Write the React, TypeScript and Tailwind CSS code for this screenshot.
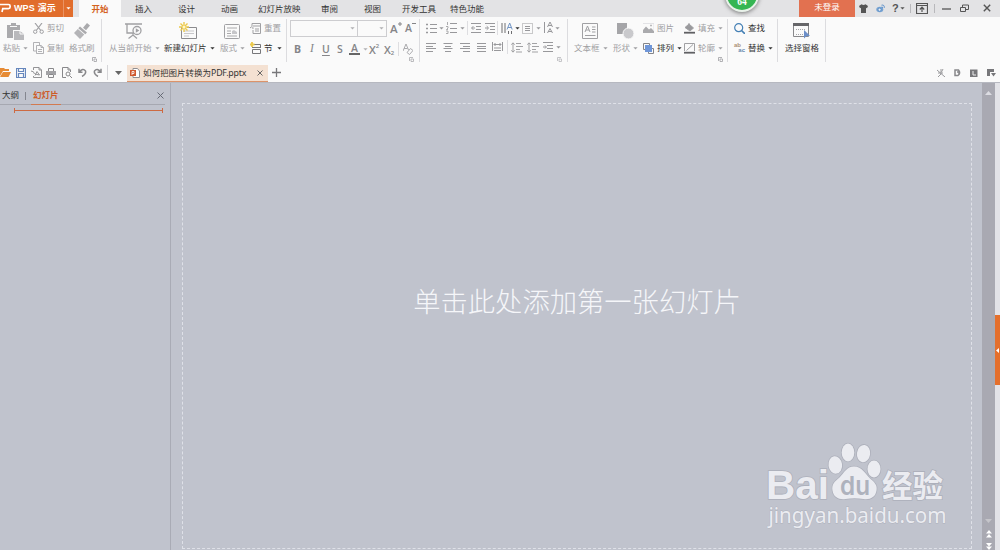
import React from 'react';

type Kids = { children?: React.ReactNode; className?: string };

const Icon = ({ w, h, children, className = '' }: Kids & { w: number; h: number }) => (
  <svg width={w} height={h} viewBox={`0 0 ${w} ${h}`} fill="none" stroke="currentColor" strokeWidth="1" className={`block shrink-0 ${className}`}>
    {children}
  </svg>
);

const Arrow = ({ className = '' }: { className?: string }) => (
  <Icon w={5} h={3} className={className}>
    <path d="M0.4 0.2h4.2L2.5 2.6z" fill="currentColor" stroke="none" />
  </Icon>
);

const Cell = ({ children, className = '' }: Kids) => (
  <div className={`flex h-full shrink-0 items-center whitespace-nowrap ${className}`}>{children}</div>
);

const Row = ({ children, className = '' }: Kids) => <div className={`flex h-5 items-center ${className}`}>{children}</div>;

const Group = ({ children, className = '' }: Kids) => (
  <div className={`flex h-[43px] shrink-0 border-r border-[#dcdcdf] ${className}`}>{children}</div>
);

const Big = ({ icon, label, arrow, className = '', pad = '' }: { icon: React.ReactNode; label: string; arrow?: boolean; className?: string; pad?: string }) => (
  <div className={`flex shrink-0 flex-col ${className}`}>
    <div className={`flex h-[22px] items-center ${pad}`}>{icon}</div>
    <div className="flex h-[13px] items-center whitespace-nowrap">
      {label}
      {arrow && <Arrow className="ml-[3px]" />}
    </div>
  </div>
);

const Launcher = () => (
  <Icon w={5} h={5}>
    <path d="M.5 4V.5H4M2 2h2.500v2.500H2z" strokeWidth=".8" />
  </Icon>
);

const Bar = () => <i className="h-[14px] w-px shrink-0 bg-[#dedee1]" />;

const Bullets = () => (
  <Icon w={11} h={11}>
    <path d="M0 1.500h2M0 5.500h2M0 9.500h2" strokeWidth="1.6" />
    <path d="M4 1.500h7M4 5.500h7M4 9.500h7" />
  </Icon>
);
const Numbers = () => (
  <Icon w={11} h={12}>
    <path d="M1.500 0v3M0 4.500h2v1.500L.5 7.500H2M0 9h2v2.500H0" strokeWidth=".8" />
    <path d="M4 1.500h7M4 6.500h7M4 10.500h7" />
  </Icon>
);
const Indent = ({ flip = false }: { flip?: boolean }) => (
  <Icon w={10} h={11}>
    <path d="M0 .5h10M5 3.500h5M5 6.500h5M0 9.500h10" />
    <path d={flip ? 'M0 5h3M1.700 3.200L3.600 5 1.700 6.800' : 'M4 5H1M2.300 3.200L.5 5l1.800 1.800'} />
  </Icon>
);
const Align = ({ d }: { d: string }) => (
  <Icon w={10} h={9}>
    <path d={d} />
  </Icon>
);
const Spacing = () => (
  <Icon w={12} h={11}>
    <path d="M2 1v9M.3 2.700L2 .8l1.700 1.900M.3 8.300L2 10.200l1.700-1.900M5 1.500h5M5 4.500h7M5 7.500h4M5 10h6" strokeWidth=".9" />
  </Icon>
);

const TitleBar = () => (
  <header className="relative flex h-[17px] bg-[#e3e3e5] text-[#333]">
    <div className="flex w-[73px] shrink-0 items-center bg-[#e16d2c] pb-px text-white">
      <Icon w={11} h={10}>
        <path d="M0 1.500h8.500q1.600 0 1.600 1.500v1q0 1.600-1.600 1.600H2.800L2 9" strokeWidth="1.7" />
      </Icon>
      <span className="ml-[3px] w-[49px] whitespace-nowrap text-[9px] font-bold leading-none">
        <span className="tracking-[0.1px]">WPS</span>
        <span className="ml-[3px]">演示</span>
      </span>
      <i className="h-[17px] w-px bg-[#ea9363]" />
      <Arrow className="ml-[2px]" />
    </div>
    <div className="ml-[6px] flex w-[42px] shrink-0 items-center justify-center bg-[#fafafa] pt-[2px] font-bold text-[#d4621f]">开始</div>
    <nav className="flex items-center pt-[2px]">
      <span className="ml-[14px] w-[43px]">插入</span>
      <span className="w-[43px]">设计</span>
      <span className="w-[37px]">动画</span>
      <span className="w-[63px]">幻灯片放映</span>
      <span className="w-[43px]">审阅</span>
      <span className="w-[38px]">视图</span>
      <span className="w-[48px]">开发工具</span>
      <span className="w-[45px]">特色功能</span>
    </nav>
    <div className="absolute -top-[23px] left-[725px] flex h-[35px] w-[34px] items-end justify-center rounded-full border-2 border-[#e9f2ea] bg-[#35b653] pb-[4px] font-['Liberation_Serif'] text-[9.500px] font-bold leading-[8px] text-white shadow-[0_1px_4px_#777]">
      64
    </div>
    <div className="ml-auto flex w-[56px] shrink-0 items-center justify-center bg-[#e27150] pb-[2px] text-white">未登录</div>
    <div className="flex w-[145px] shrink-0 items-center pb-px text-[#555]">
      <Icon w={9} h={9} className="ml-[4px]">
        <path d="M2.500.3L0 2l1 2.300 1-.5V9h5V3.800l1 .5L9 2 6.500.3Q4.500 1.800 2.500.3z" fill="currentColor" stroke="none" />
      </Icon>
      <Icon w={9} h={9} className="ml-[8px] text-[#5b8fc9]">
        <ellipse cx="3.800" cy="5.500" rx="3.500" ry="2.800" fill="#79a4d2" stroke="none" />
        <circle cx="3.600" cy="5.700" r="1.600" fill="#e8edf3" />
        <path d="M5.500 1.200q3-.8 2.800 2.600M5.500 3q1.300-.2 1.200 1" />
      </Icon>
      <span className="ml-[7px] w-[7px] font-['Liberation_Sans'] text-[11px] font-bold leading-none">?</span>
      <Arrow className="ml-px" />
      <i className="ml-[5px] h-[9px] w-px bg-[#b8b8bb]" />
      <Icon w={12} h={11} className="ml-[5px]">
        <path d="M.5.500h11v10H.500zM.5 2.500h11M6 9V4.500M3.800 6.500L6 4.200l2.200 2.300" strokeWidth="1.2" />
      </Icon>
      <i className="ml-[6px] h-[9px] w-px bg-[#b8b8bb]" />
      <Icon w={9} h={8} className="ml-[7px]"><path d="M0 5h9" strokeWidth="1.300" /></Icon>
      <Icon w={9} h={8} className="ml-[9px]"><path d="M.5 3.500h5v4h-5zM2.500 3V1h6v4.500H6" /></Icon>
      <Icon w={8} h={8} className="ml-[14px]"><path d="M.8.800l6.400 6.400M7.200.800L.8 7.200" strokeWidth="1.400" /></Icon>
    </div>
  </header>
);

const Ribbon = () => (
  <div className="flex h-[46px] pt-[2px] text-[#a0a0a3]">
    <Group className="w-[102px] pt-px">
      <Big
        className="w-[33px] pl-[3px]"
        pad="pl-[4px]"
        label="粘贴"
        arrow
        icon={
          <Icon w={17} h={17}>
            <path d="M0 2h4V0h5v2h4v5H6v8H0z" fill="#aaaaad" stroke="none" />
            <path d="M3 3.500h7" stroke="#fafafa" />
            <path d="M7 8h6l4 3v6H7z" fill="#b9b9bc" stroke="none" />
            <path d="M13 8v3h4" stroke="#fafafa" />
          </Icon>
        }
      />
      <div className="w-[36px]">
        <Row className="-mt-[2px]">
          <Icon w={11} h={11}>
            <path d="M2 0l5.800 7.500M9 0L3.300 7.500" strokeWidth="1.200" />
            <circle cx="2.200" cy="8.700" r="1.700" /><circle cx="8.700" cy="8.700" r="1.700" />
          </Icon>
          <span className="ml-[3px]">剪切</span>
        </Row>
        <Row>
          <Icon w={11} h={12}>
            <path d="M3 9H.500V.500h6V3M3.500 3.500H8l2.500 2v6h-7zM8 3.500v2h2.500M5 7.500h4M5 9.500h4" strokeWidth=".8" />
          </Icon>
          <span className="ml-[3px]">复制</span>
        </Row>
      </div>
      <div className="w-[32px]">
        <Big
          pad="pl-[5px]"
          label="格式刷"
          icon={
            <Icon w={16} h={16}>
              <path d="M13 0l3 2.500-4 4.800L9 4.700zM6 3.500l7 6-1.700 1.700-7-6z" fill="#aaaaad" stroke="none" />
              <path d="M3.800 6l6.500 5.500L6 16 0 10z" fill="#b4b4b7" stroke="none" />
            </Icon>
          }
        />
        <div className="flex h-[8px] items-center pl-[23px]"><Launcher /></div>
      </div>
    </Group>

    <Group className="w-[185px] pt-px">
      <Big
        className="w-[62px] pl-[7px]"
        pad="pl-[16px]"
        label="从当前开始"
        arrow
        icon={
          <Icon w={17} h={16}>
            <path d="M0 1h17M2 1.500v8.500h7M8 10v3M3.500 15.500L8 12l4 3.500" strokeWidth="1.300" />
            <circle cx="12" cy="7.500" r="4" fill="#fafafa" strokeWidth="1.300" />
            <path d="M10.800 5.300v4.400l3.600-2.200z" fill="currentColor" stroke="none" />
          </Icon>
        }
      />
      <Big
        className="w-[56px] text-[#333]"
        pad="pl-[15px]"
        label="新建幻灯片"
        arrow
        icon={
          <Icon w={18} h={18}>
            <path d="M2.500 5v11.500h15V5.500H8" stroke="#8b8b8e" />
            <path d="M5 9h10M5 11.500h10M5 14h5" stroke="#c7c7ca" />
            <path d="M5 0v10M0 5h10M1.500 1.500l7 7M8.500 1.500l-7 7" stroke="#ecc94b" strokeWidth="1.400" />
            <circle cx="5" cy="5" r="1.500" fill="#fff7c9" stroke="none" />
          </Icon>
        }
      />
      <Big
        className="w-[30px]"
        pad="pl-[4px]"
        label="版式"
        arrow
        icon={
          <Icon w={16} h={15}>
            <rect x=".5" y=".5" width="15" height="14" rx="1" />
            <path d="M3 4h10M3 7h4M3 9.500h4M3 12h10" strokeWidth=".9" />
            <path d="M8 10V7l2-1 3 2v2z" fill="#c6c6c9" stroke="none" />
          </Icon>
        }
      />
      <div>
        <Row className="-mt-[2px]">
          <Icon w={11} h={11}>
            <path d="M2 3V.500h8.500v10H3V7M3 3h7M5 6h4M5 8h4M0 5q3-3 3 1" />
          </Icon>
          <span className="ml-[3px]">重置</span>
        </Row>
        <Row>
          <Icon w={11} h={12}>
            <path d="M2 5.500h9M4 2.500h6.500v3M2.500 7.500h8v4h-8z" stroke="#77777a" />
            <path d="M2 0v5M0 2.500h4.500" stroke="#ecc94b" strokeWidth="1.800" />
          </Icon>
          <span className="ml-[3px] text-[#333]">节</span>
          <Arrow className="ml-[4px] text-[#333]" />
        </Row>
      </div>
    </Group>

    <Group className="w-[133px] flex-col pt-px text-[#858588]">
      <div className="flex h-[17px] items-center pl-[3px]">
        <div className="flex h-[17px] w-[68px] items-center justify-end border border-[#cdcdd0] pr-[2px] text-[#b0b0b3]"><Arrow /></div>
        <div className="-ml-px flex h-[17px] w-[30px] items-center justify-end border border-[#cdcdd0] pr-[2px] text-[#b0b0b3]"><Arrow /></div>
        <div className="ml-[3px] flex w-[15px] items-start font-['Open_Sans'] text-[11.500px] font-semibold leading-[15px]">
          <span>A</span>
          <Icon w={4} h={4} className="mt-px"><path d="M2 0v4M0 2h4" /></Icon>
        </div>
        <div className="flex items-start font-['Open_Sans'] text-[10.500px] font-semibold leading-[15px]">
          <span>A</span>
          <Icon w={4} h={4} className="mt-px"><path d="M0 1.500h4" /></Icon>
        </div>
      </div>
      <div className="mt-[5px] flex h-[14px] items-center pl-[7px] font-['Open_Sans'] text-[10.500px] font-bold leading-none">
        <Cell className="w-[14px]">B</Cell>
        <Cell className="w-[14px] font-['Liberation_Serif'] text-[11.500px] font-normal italic"><span className="pl-[2px]">I</span></Cell>
        <Cell className="w-[15px] font-semibold"><span className="underline underline-offset-2">U</span></Cell>
        <Cell className="w-[12px] font-semibold">S</Cell>
        <Cell className="w-[20px]">
          <span className="flex h-[12px] w-[11px] items-center justify-center border-b-2 border-[#666] font-semibold">A</span>
          <Arrow className="ml-[3px] text-[#b0b0b3]" />
        </Cell>
        <Cell className="w-[15px] text-[11px] font-semibold">X<span className="mb-[7px] text-[6px]">2</span></Cell>
        <Cell className="w-[14px] text-[11px] font-semibold">X<span className="mt-[7px] text-[6px]">2</span></Cell>
        <Bar />
        <Icon w={10} h={11} className="ml-[4px] text-[#ababae]">
          <path d="M0 7L3 0l2.500 6M1 4.500h3.500M4 8.500l3.500-4L10 6.500l-3.500 4z" />
        </Icon>
      </div>
      <div className="flex h-[6px] items-center justify-end pr-[5px] text-[#ababae]"><Launcher /></div>
    </Group>

    <Group className="w-[148px] flex-col text-[#98989b]">
      <div className="flex h-[19px] items-center pl-[6px]">
        <Cell className="w-[20px]"><Bullets /><Arrow className="ml-[2px]" /></Cell>
        <Cell className="w-[21px]"><Numbers /><Arrow className="ml-[3px]" /></Cell>
        <Bar />
        <Cell className="w-[14px] pl-[3px]"><Indent /></Cell>
        <Cell className="w-[15px] pl-[3px]"><Indent flip /></Cell>
        <Bar />
        <Cell className="w-[24px] pl-[3px]">
          <Icon w={12} h={11}><path d="M1 0v10M4 0v10M7.500 8v3M10.500 8v3" stroke="#6e6e71" /><path d="M6 6.500L8.700 0l2.500 6.500M7 4.500h3.500" stroke="#7194c4" /></Icon>
          <Arrow className="ml-[2px] text-[#333]" />
        </Cell>
        <Cell className="w-[19px]">
          <Icon w={11} h={11}><path d="M.5.500h10v10H.500z" strokeDasharray="1 1" /><path d="M3 3.500h5M3 5.500h5M3 7.500h5" /></Icon>
          <Arrow className="ml-[3px]" />
        </Cell>
        <Cell className="pl-[3px]">
          <Icon w={9} h={12}><path d="M.5 0v11M3.500 5L6 0l2.500 5M4 3.500h4M3.500 11L6 6.500 8.500 11M4 9.500h4" /></Icon>
          <Arrow className="ml-[2px]" />
        </Cell>
      </div>
      <div className="mt-px flex h-[18px] items-center pl-[6px]">
        <Cell className="w-[17px]"><Align d="M0 .5h10M0 3.500h7M0 5.500h10M0 8.500h7" /></Cell>
        <Cell className="w-[17px]"><Align d="M.5.500h9M2 3.500h6M.5 5.500h9M2 8.500h6" /></Cell>
        <Cell className="w-[17px]"><Align d="M0 .5h10M3 3.500h7M0 5.500h10M3 8.500h7" /></Cell>
        <Cell className="w-[15px]"><Align d="M0 .5h9M0 3.500h9M0 5.500h9M0 8.500h9" /></Cell>
        <Cell className="w-[15px]"><Icon w={11} h={10}><path d="M.5 0v9M10.500 0v9M2 2.500h7M3.500 1L2 2.500 3.500 4M7.500 1L9 2.500 7.500 4M2 6h7M2 8.500h7" /></Icon></Cell>
        <Bar />
        <Cell className="w-[19px] pl-[3px]"><Spacing /></Cell>
        <Cell className="w-[16px]"><Spacing /></Cell>
        <Icon w={10} h={10}><path d="M0 .5h10M4 3.500h6M4 6.500h6M0 9.500h10M0 5h3M2 3.500L3.500 5 2 6.500" /></Icon>
        <Arrow className="ml-[3px]" />
      </div>
      <div className="flex h-[6px] items-center justify-end pr-[5px] text-[#b8b8bb]"><Launcher /></div>
    </Group>

    <Group className="w-[160px] pt-px">
      <Big
        className="w-[45px] pl-[6px]"
        pad="pl-[8px]"
        label="文本框"
        arrow
        icon={
          <Icon w={16} h={16}>
            <path d="M.5.500h15v15H.500zM3 9l2.500-6L8 9M4 7h3M10 4h3.500M10 6.500h3.500M10 9h3.500M3 12.500h10.500" />
          </Icon>
        }
      />
      <Big
        className="w-[30px]"
        pad="pl-[4px]"
        label="形状"
        arrow
        icon={
          <Icon w={17} h={16}>
            <path d="M0 0h10v11H0z" fill="#a5a5a8" stroke="none" />
            <circle cx="11.500" cy="10.500" r="5.500" fill="#c9c9cc" stroke="#fafafa" />
          </Icon>
        }
      />
      <div className="w-[41px]">
        <Row className="-mt-[2px]">
          <Icon w={11} h={10}>
            <path d="M0 10V7l3-3.500 3 3L8 5l3 3v2z" fill="#aaaaad" stroke="none" />
            <path d="M0 .5h11v7" stroke="#e3e3e6" />
            <path d="M7 2.500h2" stroke="#bababd" strokeWidth="1.500" />
          </Icon>
          <span className="ml-[3px]">图片</span>
        </Row>
        <Row className="text-[#333]">
          <Icon w={11} h={11}>
            <path d="M.5.500h6v6h-6zM5.500 5.500h5v5h-5z" fill="#fafafa" stroke="#858588" />
            <path d="M2 2h7v7H2z" fill="#6f96d8" stroke="none" />
          </Icon>
          <span className="ml-[3px]">排列</span>
          <Arrow className="ml-[3px]" />
        </Row>
      </div>
      <div>
        <Row className="-mt-[2px]">
          <Icon w={11} h={11}>
            <path d="M1 4.500L5 1l4.500 4L6 8zM5 0v4" fill="#99999c" />
            <path d="M0 9.700h11" stroke="#606063" strokeWidth="1.800" />
          </Icon>
          <span className="ml-[3px]">填充</span>
          <Arrow className="ml-[3px]" />
        </Row>
        <Row>
          <Icon w={11} h={11}>
            <path d="M.5 8V.500h10V8M2.500 7.500L9 1.500" />
            <path d="M0 9.700h11" stroke="#606063" strokeWidth="1.800" />
          </Icon>
          <span className="ml-[3px]">轮廓</span>
          <Arrow className="ml-[3px]" />
        </Row>
        <div className="-mt-px flex h-[5px] items-center justify-end"><Launcher /></div>
      </div>
    </Group>

    <Group className="w-[50px] pl-[6px] text-[#333]">
      <div>
        <Row className="-mt-px">
          <Icon w={11} h={11} className="text-[#4580b5]">
            <circle cx="4.700" cy="4.700" r="4" strokeWidth="1.200" /><path d="M7.500 7.500L11 11" strokeWidth="1.600" />
          </Icon>
          <span className="ml-[3px]">查找</span>
        </Row>
        <Row>
          <span className="w-[11px] font-['Liberation_Sans'] text-[6px] font-bold leading-[5px]">
            <span className="block text-[#aa9077]">ab</span><span className="block text-right text-[#6888ad]">ac</span>
          </span>
          <span className="ml-[3px]">替换</span>
          <Arrow className="ml-[3px]" />
        </Row>
      </div>
    </Group>
    <Group className="w-[48px] pt-px text-[#333]">
      <Big
        className="pl-[7px]"
        pad="pl-[8px]"
        label="选择窗格"
        icon={
          <Icon w={17} h={16}>
            <path d="M.5 2.500h15v11H.500z" stroke="#88888b" />
            <path d="M0 1.500h16" stroke="#666669" strokeWidth="3" />
            <path d="M3 6.500h10M3 11.500h7" stroke="#a5a5a8" strokeDasharray="1 1" />
            <path d="M11 7v8.500l2.300-2.200 3.700-.6z" fill="#6c8fc9" stroke="none" />
          </Icon>
        }
      />
    </Group>
  </div>
);

const FileBar = () => (
  <div className="flex h-[19px] items-center text-[#88888b]">
    <Icon w={11} h={9} className="text-[#e68b35]">
      <path d="M0 0h4l1 1h4v2H3L0 8z" fill="currentColor" stroke="none" /><path d="M3 4h8L8.500 9H0z" fill="currentColor" stroke="none" />
    </Icon>
    <Icon w={10} h={10} className="ml-[5px] text-[#6687bd]">
      <path d="M.5.500h9v9h-9zM2.500.500v3h5v-3M2.500 9.500v-4h5v4" strokeWidth="1.200" />
    </Icon>
    <Icon w={11} h={11} className="ml-[5px]">
      <path d="M2.500 3V.500H8l2.500 2.500v7.500h-8V9M8 .5V3h2.500M0 4q3 0 3.500 3M4 8.500l2-4L8.500 8 4 7" strokeWidth=".9" />
    </Icon>
    <Icon w={10} h={10} className="ml-[4px]">
      <path d="M2.500 3V.500h5V3M2.500 6.500h5v3h-5z" /><path d="M0 3h10v4H8V6H2v1H0z" fill="#a3a3a6" stroke="none" />
    </Icon>
    <Icon w={10} h={11} className="ml-[6px]">
      <path d="M4 10.500H.500V.500H6L8.500 3v2M6 .5V3h2.500" /><circle cx="6" cy="7" r="2" /><path d="M7.500 8.500L10 11" />
    </Icon>
    <Icon w={9} h={9} className="ml-[6px]">
      <path d="M1 .8v3.500h3.500M1.300 4Q5-.3 7.500 3q1 3-3.500 5.500" strokeWidth="1.500" />
    </Icon>
    <Icon w={9} h={9} className="ml-[6px]">
      <path d="M8 .8v3.500H4.500M7.700 4Q4-.3 1.500 3q-1 3 3.500 5.500" strokeWidth="1.500" />
    </Icon>
    <i className="ml-[5px] h-[15px] w-px bg-[#d5d5d8]" />
    <Icon w={7} h={4} className="ml-[7px]"><path d="M0 0h7L3.500 4z" fill="#666" stroke="none" /></Icon>
    <div className="ml-[5px] flex h-[17px] w-[141px] shrink-0 items-center self-end border-b border-[#dc936a] bg-[#f4e1d2] pl-[3px] text-[#333]">
      <Icon w={10} h={10}>
        <path d="M3 .5h4.500L9.500 3v6.500H3z" fill="#fff" stroke="#8f8f92" />
        <path d="M0 2h6v6H0z" fill="#d0582e" stroke="none" />
        <path d="M2 7V3.500h2v2H2" stroke="#fff" strokeWidth=".8" />
      </Icon>
      <span className="ml-[3px] w-[114px] whitespace-nowrap">如何把图片转换为<span className="font-['Noto_Sans'] text-[8.800px] tracking-[-0.2px]">PDF.pptx</span></span>
      <Icon w={6} h={6}><path d="M.5.500l5 5M5.500.500l-5 5" stroke="#666" /></Icon>
    </div>
    <Icon w={9} h={9} className="ml-[4px]"><path d="M4.500 0v9M0 4.500h9" stroke="#77777a" strokeWidth="1.300" /></Icon>
    <div className="ml-auto flex items-center gap-[9px] pr-[4px]">
      <Icon w={8} h={8} className="text-[#9a9a9d]"><path d="M0 1l8 7M4 0v5L1 8M1 4h5M6 0L4.500 3" /></Icon>
      <Icon w={7} h={8}><path d="M1 1h3.500q2.500 3-.5 5.500H1zM3 3h2v2" strokeWidth="1.500" /></Icon>
      <Icon w={8} h={8}><path d="M0 .5h7.500V8H0z" fill="#77777a" stroke="none" /><path d="M3 2v4h3" stroke="#eee" /></Icon>
      <Icon w={9} h={8}><path d="M0 0h7v3H3v4H0zM4 4h5L6.500 7.500z" fill="#77777a" stroke="none" /></Icon>
    </div>
  </div>
);

const Watermark = () => (
  <svg width="190" height="98" viewBox="0 0 190 98" className="absolute left-[594px] top-[357px]">
    <g fill="#ebecf1" stroke="#adb0bb" strokeWidth="1.600" paintOrder="stroke">
      <text x="1" y="58.500" fontFamily="'Liberation Sans'" fontWeight="700" fontSize="41" textLength="63" lengthAdjust="spacingAndGlyphs">Bai</text>
      <ellipse cx="70.300" cy="25" rx="6.800" ry="8.700" transform="rotate(-8 70 25)" />
      <ellipse cx="83" cy="12.500" rx="6.300" ry="9" />
      <ellipse cx="98.500" cy="13.500" rx="6.600" ry="8.700" transform="rotate(8 98 14)" />
      <ellipse cx="109" cy="29" rx="6.500" ry="8.500" />
      <path d="M89 26.500c8 0 11 7 16 12 5 4 7.500 7 6.500 12-1 7-7 9.500-13 8.500-6-1-12-1-18 0-6 1-12-1.500-13-8.500-1-6 2-9 7-13 5-5 7-11 14.500-11z" />
      <text x="117" y="56.500" fontFamily="'Noto Sans CJK SC'" fontWeight="700" fontSize="30.500" textLength="61">经验</text>
      <text x="3.500" y="83" fontFamily="'Noto Sans'" fontSize="22" strokeWidth=".8" textLength="178" lengthAdjust="spacingAndGlyphs">jingyan.baidu.com</text>
    </g>
    <text x="75" y="54.500" fill="#aeb2bd" fontFamily="Inter" fontWeight="600" fontSize="26" textLength="30" lengthAdjust="spacingAndGlyphs">du</text>
  </svg>
);

export default function App() {
  return (
    <div className="flex h-[550px] w-[1000px] flex-col overflow-hidden bg-[#fafafa] font-['Liberation_Sans','Noto_Sans_CJK_SC',sans-serif] text-[8.500px] leading-[13px]">
      <TitleBar />
      <Ribbon />
      <FileBar />
      <main className="flex min-h-0 flex-1 border-t border-[#b6b8c0] bg-[#c0c3cd]">
        <aside className="w-[171px] shrink-0 border-r border-[#a9abb5] text-[#333]">
          <div className="mr-[5px] flex h-[22px] items-start border-b border-[#a6a8b1] pl-[2px]">
            <span className="w-[23px] pt-[6px]">大纲</span>
            <i className="mt-[9px] h-[8px] w-px bg-[#84868f]" />
            <span className="ml-[5px] h-[22px] w-[30px] shrink-0 border-b border-[#d27a50] pl-[2px] pt-[6px] font-bold text-[#cd5c28]">幻灯片</span>
            <Icon w={7} h={7} className="ml-auto mr-px mt-[9px]"><path d="M.5.500l6 6M6.500.500l-6 6" stroke="#666a75" /></Icon>
          </div>
          <div className="ml-[14px] mt-[3px] flex h-[5px] w-[149px] items-center border-x border-[#cd6a42]">
            <i className="h-px w-full bg-[#cd6a42]" />
          </div>
        </aside>
        <section className="relative w-[811px] shrink-0 pl-[11px] pt-[20px]">
          <div className="flex h-[446px] w-[790px] justify-center border border-dashed border-[#dfe1e8] pt-[176px] font-['Noto_Sans_CJK_SC'] text-[27.300px] font-light leading-[40px] text-[#f5f6f9]">
            单击此处添加第一张幻灯片
          </div>
          <Watermark />
        </section>
        <div className="flex w-[13px] shrink-0 flex-col items-center bg-[#a9a9b2] text-[#dcdce2]">
          <Icon w={7} h={4} className="mt-[8px]"><path d="M0 4h7L3.500 0z" fill="currentColor" stroke="none" /></Icon>
          <Icon w={7} h={4} className="mt-auto text-[#c5c5ca]"><path d="M0 0h7L3.500 4z" fill="currentColor" stroke="none" /></Icon>
          <Icon w={6} h={8} className="mt-[7px] text-white"><path d="M0 3.500h6L3 0zM0 7.500h6L3 4z" fill="currentColor" stroke="none" /></Icon>
          <Icon w={6} h={7} className="mt-[5px] text-white"><path d="M0 0h6L3 3.500zM0 3.500h6L3 7z" fill="currentColor" stroke="none" /></Icon>
        </div>
        <div className="w-[5px] bg-[#e2e2e7] pt-[232px]">
          <div className="flex h-[70px] items-center justify-center bg-[#e46f2c]">
            <Icon w={3} h={5}><path d="M3 0v5L0 2.500z" fill="#fff" stroke="none" /></Icon>
          </div>
        </div>
      </main>
    </div>
  );
}
